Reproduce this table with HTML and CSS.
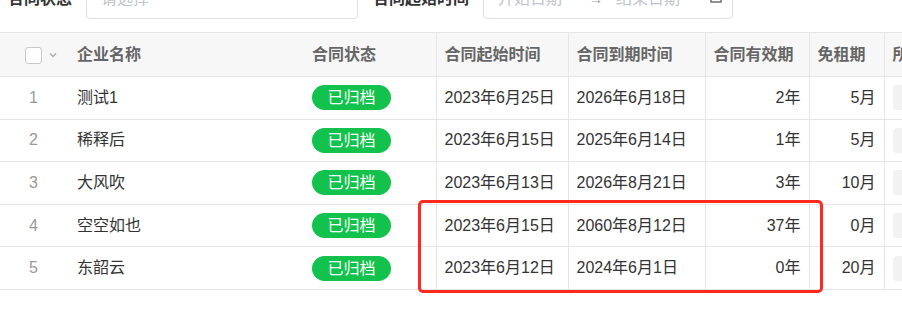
FILE: index.html
```html
<!DOCTYPE html>
<html lang="zh-CN">
<head>
<meta charset="utf-8">
<title>合同列表</title>
<link rel="stylesheet" href="styles.css">
</head>
<body>
<div class="page">
  <div class="filters">
    <span class="label">合同状态</span>
    <div class="select">
      <span class="placeholder">请选择</span>
      <svg class="arrow" width="12" height="8" viewBox="0 0 12 8"><path d="M1.5 1.5 L6 6 L10.5 1.5" fill="none" stroke="#c0c4cc" stroke-width="1.5"/></svg>
    </div>
    <span class="label label-2">合同起始时间</span>
    <div class="range">
      <span class="placeholder">开始日期</span>
      <span class="sep">→</span>
      <span class="placeholder">结束日期</span>
      <svg class="cal" width="12" height="12" viewBox="0 0 12 12"><rect x="1" y="1.5" width="10" height="9.5" fill="none" stroke="#666" stroke-width="1.4"/><rect x="1" y="1.5" width="10" height="3" fill="#666"/><rect x="5" y="6.5" width="3" height="2.5" fill="#666"/></svg>
    </div>
  </div>

  <div class="table-wrap">
    <table class="grid">
      <colgroup>
        <col class="c-sel"><col class="c-name"><col class="c-status"><col class="c-start"><col class="c-end"><col class="c-valid"><col class="c-free"><col class="c-last">
      </colgroup>
      <thead>
        <tr>
          <th class="sel"><span class="check"></span><svg class="chev" width="8" height="6" viewBox="0 0 8 6"><path d="M1 1.5 L4 4.5 L7 1.5" fill="none" stroke="#aaa" stroke-width="1.3"/></svg></th>
          <th class="nob">企业名称</th>
          <th>合同状态</th>
          <th>合同起始时间</th>
          <th>合同到期时间</th>
          <th>合同有效期</th>
          <th>免租期</th>
          <th>所属楼宇</th>
        </tr>
      </thead>
      <tbody>
        <tr>
          <td class="idx">1</td><td class="nob">测试1</td><td><span class="badge">已归档</span></td>
          <td>2023年6月25日</td><td>2026年6月18日</td><td class="num">2年</td><td class="num">5月</td><td><span class="btn"></span></td>
        </tr>
        <tr>
          <td class="idx">2</td><td class="nob">稀释后</td><td><span class="badge">已归档</span></td>
          <td>2023年6月15日</td><td>2025年6月14日</td><td class="num">1年</td><td class="num">5月</td><td><span class="btn"></span></td>
        </tr>
        <tr>
          <td class="idx">3</td><td class="nob">大风吹</td><td><span class="badge">已归档</span></td>
          <td>2023年6月13日</td><td>2026年8月21日</td><td class="num">3年</td><td class="num">10月</td><td><span class="btn"></span></td>
        </tr>
        <tr>
          <td class="idx">4</td><td class="nob">空空如也</td><td><span class="badge">已归档</span></td>
          <td>2023年6月15日</td><td>2060年8月12日</td><td class="num">37年</td><td class="num">0月</td><td><span class="btn"></span></td>
        </tr>
        <tr>
          <td class="idx">5</td><td class="nob">东韶云</td><td><span class="badge">已归档</span></td>
          <td>2023年6月12日</td><td>2024年6月1日</td><td class="num">0年</td><td class="num">20月</td><td><span class="btn"></span></td>
        </tr>
      </tbody>
    </table>
    <div class="highlight"></div>
  </div>
</div>
</body>
</html>
```
FILE: styles.css
```css
html, body {
  margin: 0;
  padding: 0;
  background: #fff;
  overflow: hidden;
}
body {
  font-family: "Liberation Sans", "Noto Sans CJK SC", sans-serif;
  font-size: 16px;
  color: #333;
}
.page {
  width: 902px;
  height: 336px;
  overflow: hidden;
}
.filters {
  display: flex;
  align-items: center;
  height: 40px;
  margin-top: -21px;
  padding-left: 8px;
}
.label {
  font-weight: bold;
  color: #333;
  line-height: 20px;
  margin-right: 14px;
}
.label-2 {
  margin-left: 15px;
}
.select {
  box-sizing: border-box;
  width: 272px;
  height: 40px;
  border: 1px solid #dcdfe6;
  border-radius: 4px;
  display: flex;
  align-items: center;
  padding: 0 19px 0 14px;
  justify-content: space-between;
}
.placeholder {
  color: #c0c4cc;
  line-height: 20px;
}
.range {
  box-sizing: border-box;
  width: 250px;
  height: 40px;
  border: 1px solid #dcdfe6;
  border-radius: 4px;
  display: flex;
  align-items: center;
  padding: 0 0 0 14px;
}
.sep {
  color: #999;
  margin: 0 13px 0 27px;
  width: 14px;
  font-size: 14px;
}
.cal {
  margin-left: 30px;
  margin-top: -4px;
}
.arrow {
  margin-top: -6px;
}
.table-wrap {
  position: relative;
  margin-top: 13px;
}
.grid {
  table-layout: fixed;
  border-collapse: collapse;
  width: 1010px;
}
.c-sel { width: 69px; }
.c-name { width: 235px; }
.c-status { width: 132px; }
.c-start { width: 132px; }
.c-end { width: 137px; }
.c-valid { width: 104px; }
.c-free { width: 75px; }
.c-last { width: 126px; }
th, td {
  border: 1px solid #e6e6e6;
  border-left: none;
  padding: 0 8px;
  text-align: left;
  white-space: nowrap;
  overflow: hidden;
}
th {
  height: 43px;
  background: #f7f7f7;
  color: #666;
  font-weight: bold;
  line-height: 20px;
}
td {
  height: 41.6px;
  line-height: 20px;
  color: #333;
}
th.sel, td.idx, th.nob, td.nob {
  border-right: none;
}
th.sel {
  padding: 0 0 0 25px;
}
.check {
  display: inline-block;
  box-sizing: border-box;
  width: 17px;
  height: 17px;
  border: 1px solid #c8c8c8;
  border-radius: 3px;
  background: #fff;
  vertical-align: middle;
}
.chev {
  vertical-align: middle;
  margin-left: 7px;
}
td.idx {
  padding: 0 0 0 25px;
  color: #999;
  text-indent: 4px;
}
td.num {
  text-align: right;
}
.badge {
  display: inline-block;
  width: 79px;
  height: 25px;
  line-height: 25px;
  border-radius: 13px;
  background: #12c24c;
  color: #fff;
  text-align: center;
  vertical-align: middle;
}
.btn {
  display: inline-block;
  width: 120px;
  height: 25px;
  border-radius: 4px;
  background: #f2f2f2;
  vertical-align: middle;
}
.highlight {
  position: absolute;
  left: 418px;
  top: 168px;
  width: 405px;
  height: 93px;
  box-sizing: border-box;
  border: 3px solid #ff2a1f;
  border-radius: 5px;
}
```
